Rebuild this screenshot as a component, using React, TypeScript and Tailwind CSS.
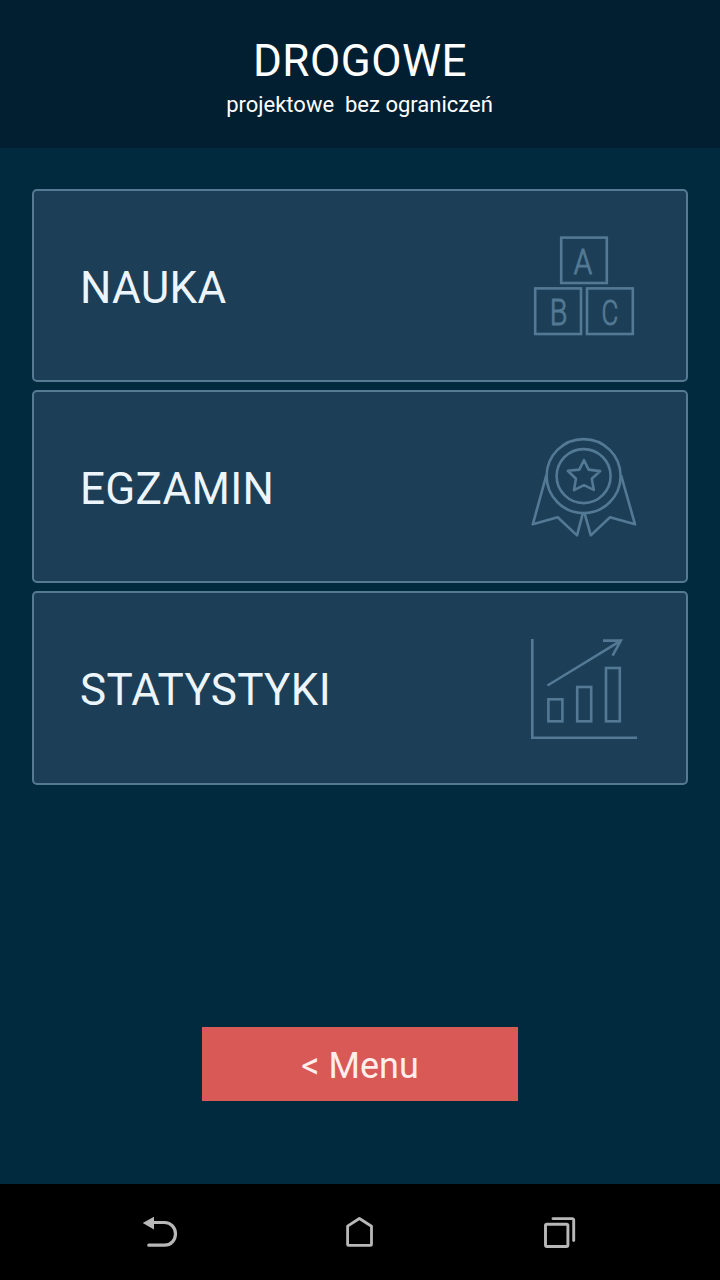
type MenuCardProps = {
  title: string;
  icon: React.ReactNode;
  className?: string;
};

function MenuCard({ title, icon, className = "h-[193px]" }: MenuCardProps) {
  return (
    <button
      className={`flex w-full items-center justify-between rounded-[5px] border-2 border-[#567a94] bg-[#1c3f57] pr-[46px] pl-[46px] text-left ${className}`}
    >
      <span className="pt-1 text-[44px] leading-[52px] tracking-[0.3px] text-[#edf5fc]">
        {title}
      </span>
      {icon}
    </button>
  );
}

function BlocksIcon() {
  return (
    <svg
      width="112"
      height="113"
      viewBox="0 0 112 113"
      fill="none"
      stroke="#537994"
      strokeWidth="2.6"
    >
      <rect x="33.2" y="8.6" width="45.6" height="45.4" />
      <rect x="7.2" y="59.4" width="45.8" height="45.6" />
      <rect x="59" y="59.4" width="45.8" height="45.6" />
      <g
        fill="#537994"
        strokeWidth="1"
        strokeLinejoin="round"
        fontFamily="Roboto, sans-serif"
        fontSize="35"
        fontWeight="300"
        textAnchor="middle"
      >
        <text transform="translate(55 44.5) scale(0.84 1)">A</text>
        <text transform="translate(30.6 96) scale(0.82 1.04)">B</text>
        <text transform="translate(81.8 95.7) scale(0.74 1.02)">C</text>
      </g>
    </svg>
  );
}

function AwardIcon() {
  return (
    <svg
      width="112"
      height="113"
      viewBox="0 0 112 113"
      fill="none"
      stroke="#537994"
      strokeWidth="2.6"
      strokeLinejoin="round"
    >
      <circle cx="55.6" cy="46.1" r="37" />
      <circle cx="55.6" cy="46.1" r="27" />
      <path d="M56 30.2l4.6 9.4 11.6 1.5-8.4 7.6 2 11.2-9.8-4.8-10 5 1.9-11.4-8.1-7.9 11.5-1.2z" />
      <path d="M18.4 45L4.8 94.3l24.9-7L49 105.4l5.8-22" />
      <path d="M93 45l14 49.3-25-7-19.2 18.1-6.2-22" />
    </svg>
  );
}

function ChartIcon() {
  return (
    <svg
      width="112"
      height="112"
      viewBox="0 0 112 112"
      fill="none"
      stroke="#537994"
      strokeWidth="2.6"
    >
      <path d="M4.3 7v98.7H109" />
      <rect x="20.4" y="67.3" width="14" height="22" />
      <rect x="49.2" y="55" width="14" height="34.3" />
      <rect x="78" y="36" width="13.8" height="53.3" />
      <path d="M19.5 53.5L92.5 8.8" />
      <path d="M75 8.6h17.8L84.6 23.6" />
    </svg>
  );
}

function BackIcon() {
  return (
    <svg width="40" height="40" viewBox="0 0 40 40" fill="none">
      <path d="M2.7 11L14 4.8v12.6z" fill="#b8b8b8" />
      <path
        d="M13 10.5h11.5c6.5 0 11 5 11 11.3s-4.5 11.4-11 11.4H8.8"
        stroke="#b8b8b8"
        strokeWidth="3.2"
        strokeLinecap="round"
      />
    </svg>
  );
}

function HomeIcon() {
  return (
    <svg
      width="40"
      height="40"
      viewBox="0 0 40 40"
      fill="none"
      stroke="#b8b8b8"
      strokeWidth="2.8"
      strokeLinejoin="round"
    >
      <path d="M7.6 14.2L19.4 6.5l12.1 7.7v18.2a1 1 0 0 1-1 1H8.6a1 1 0 0 1-1-1z" />
    </svg>
  );
}

function RecentsIcon() {
  return (
    <svg
      width="40"
      height="40"
      viewBox="0 0 40 40"
      fill="none"
      stroke="#b8b8b8"
      strokeWidth="2.9"
      strokeLinecap="round"
      strokeLinejoin="round"
    >
      <rect x="5.5" y="12.2" width="22.4" height="22.3" rx="1.4" />
      <path d="M13 6.6h19.3a1.4 1.4 0 0 1 1.4 1.4v20.6" />
    </svg>
  );
}

export default function App() {
  return (
    <div className="flex h-[1280px] w-[720px] flex-col bg-[#012a3f] font-[Roboto,sans-serif]">
      <header className="flex h-[148px] flex-col items-center bg-[#021f32] pt-[35px] text-white">
        <h1 className="text-[44px] leading-[52px] tracking-[0.5px]">DROGOWE</h1>
        <p className="mt-1 pr-px text-[22px] leading-7 whitespace-pre">
          projektowe  bez ograniczeń
        </p>
      </header>

      <main className="flex grow flex-col items-center px-8 pt-[41px]">
        <div className="flex w-full flex-col gap-2">
          <MenuCard title="NAUKA" icon={<BlocksIcon />} />
          <MenuCard title="EGZAMIN" icon={<AwardIcon />} />
          <MenuCard
            title="STATYSTYKI"
            icon={<ChartIcon />}
            className="h-[194px]"
          />
        </div>

        <button className="mt-[242px] h-[74px] w-[316px] bg-[#d95956] pt-1 text-[36px] text-[#ffeeec]">
          &lt; Menu
        </button>
      </main>

      <nav className="flex h-24 items-center justify-between bg-black px-[140px]">
        <BackIcon />
        <HomeIcon />
        <RecentsIcon />
      </nav>
    </div>
  );
}
